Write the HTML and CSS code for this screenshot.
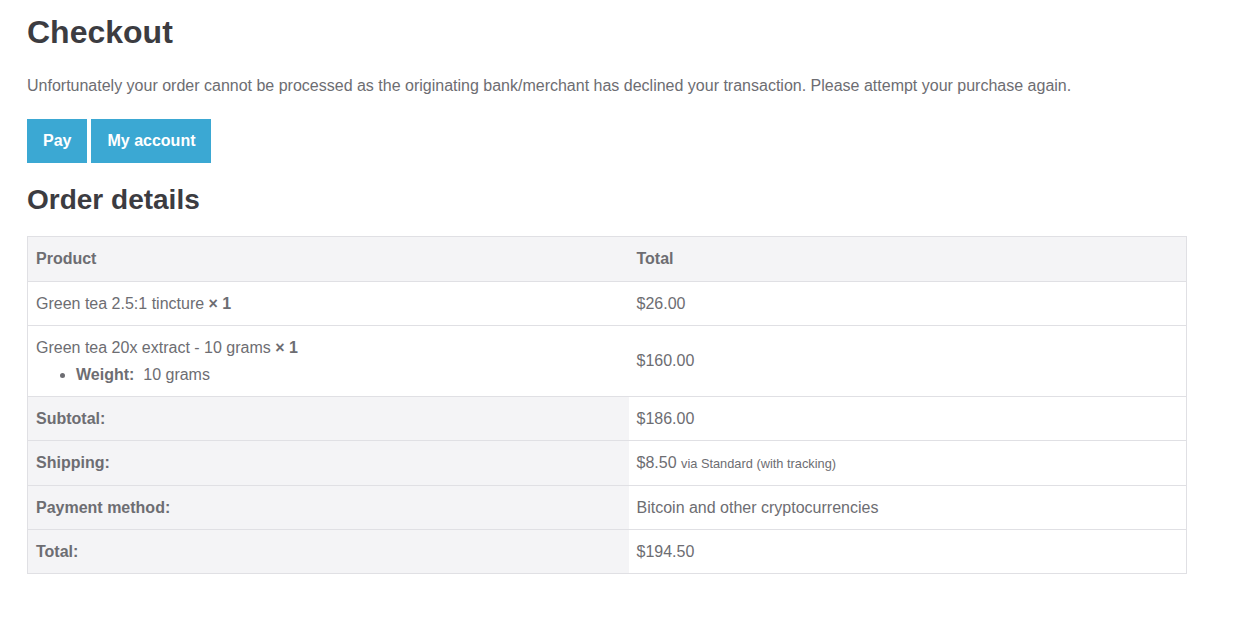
FILE: index.html
```html
<!DOCTYPE html>
<html lang="en">
<head>
<meta charset="utf-8">
<title>Checkout</title>
<link rel="stylesheet" href="styles.css">
</head>
<body>
<main class="page">
  <h1 class="title">Checkout</h1>
  <p class="notice">Unfortunately your order cannot be processed as the originating bank/merchant has declined your transaction. Please attempt your purchase again.</p>
  <div class="actions">
    <a class="button" href="#">Pay</a>
    <a class="button" href="#">My account</a>
  </div>
  <h2 class="section-title">Order details</h2>
  <table class="order-table">
    <thead>
      <tr>
        <th class="col-product">Product</th>
        <th class="col-total">Total</th>
      </tr>
    </thead>
    <tbody>
      <tr>
        <td class="col-product">Green tea 2.5:1 tincture <strong class="qty">× 1</strong></td>
        <td class="col-total">$26.00</td>
      </tr>
      <tr>
        <td class="col-product">Green tea 20x extract - 10 grams <strong class="qty">× 1</strong>
          <ul class="meta">
            <li><strong>Weight:</strong>&nbsp; 10 grams</li>
          </ul>
        </td>
        <td class="col-total">$160.00</td>
      </tr>
    </tbody>
    <tfoot>
      <tr>
        <th class="col-product">Subtotal:</th>
        <td class="col-total">$186.00</td>
      </tr>
      <tr>
        <th class="col-product">Shipping:</th>
        <td class="col-total">$8.50 <small class="via">via Standard (with tracking)</small></td>
      </tr>
      <tr>
        <th class="col-product">Payment method:</th>
        <td class="col-total">Bitcoin and other cryptocurrencies</td>
      </tr>
      <tr>
        <th class="col-product">Total:</th>
        <td class="col-total">$194.50</td>
      </tr>
    </tfoot>
  </table>
</main>
</body>
</html>
```

FILE: styles.css
```css
* { box-sizing: border-box; }

html, body {
  margin: 0;
  padding: 0;
  background: #ffffff;
}

body {
  font-family: "Liberation Sans", Arial, sans-serif;
  font-size: 16px;
  color: #6d6d72;
}

.page {
  padding: 13px 27px 0 27px;
}

.title {
  margin: 0;
  font-size: 32px;
  line-height: 38.4px;
  font-weight: 700;
  color: #3c3c41;
}

.notice {
  margin: 23px 0 0 0;
  line-height: 24px;
}

.actions {
  display: flex;
  gap: 4px;
  margin-top: 21px;
}

.button {
  display: block;
  background: #3ba8d3;
  color: #ffffff;
  font-weight: 700;
  text-decoration: none;
  padding: 12px 16px;
  line-height: 20px;
}

.section-title {
  margin: 20px 0 0 0;
  font-size: 28px;
  line-height: 33.6px;
  font-weight: 700;
  color: #3c3c41;
}

.order-table {
  margin-top: 19px;
  width: 1160px;
  border-collapse: collapse;
  border: 1px solid #e0e0e4;
  table-layout: fixed;
}

.order-table th,
.order-table td {
  text-align: left;
  vertical-align: middle;
  padding: 12px 8px;
  line-height: 19.2px;
  border-top: 1px solid #e0e0e4;
  font-size: 16px;
}

.order-table th {
  font-weight: 700;
}

.order-table .col-product {
  width: 601px;
}

.order-table thead th {
  background: #f4f4f6;
  padding-top: 12px;
  padding-bottom: 13px;
}

.order-table tfoot th {
  background: #f4f4f6;
}

.order-table td {
  background: #ffffff;
}

.qty {
  font-weight: 700;
}

.meta {
  margin: 8px 0 0 0;
  padding-left: 40px;
  line-height: 18px;
}

.meta strong {
  font-weight: 700;
}

.via {
  font-size: 12.8px;
}
```
